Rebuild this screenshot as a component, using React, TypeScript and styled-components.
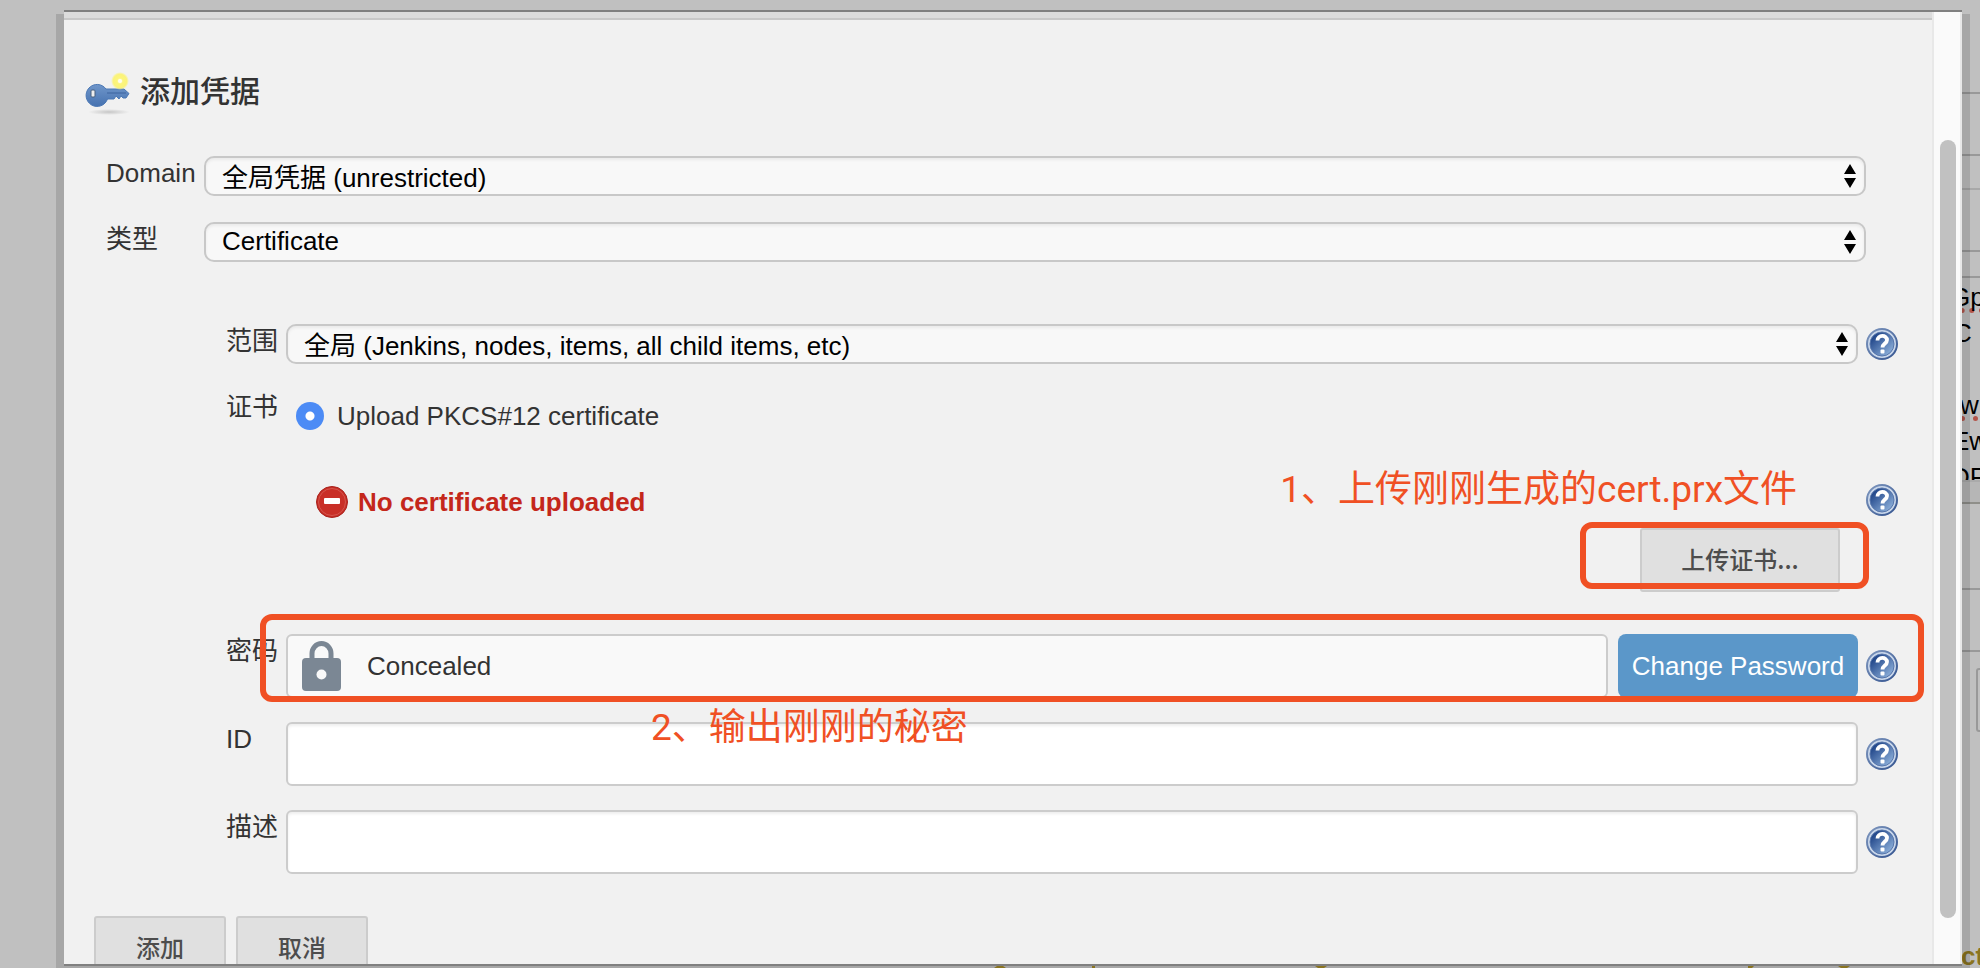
import React from "react";
import styled, { createGlobalStyle } from "styled-components";

const sans = `"Liberation Sans", Arial, "Noto Sans CJK SC", sans-serif`;
const cjk = `"Noto Sans CJK SC", "Liberation Sans", sans-serif`;

const GlobalStyle = createGlobalStyle`
  *, *::before, *::after { box-sizing: border-box; }
  body {
    margin: 0;
    background: #c0c0c0;
    color: #333;
    font: 26px/34px ${sans};
  }
  button, input, select { font: inherit; margin: 0; }
`;

const Page = styled.div`
  position: relative;
  height: 100vh;
  overflow: hidden;
  padding: 10px 18px 2px 64px;
`;

/* Dimmed configuration page that shows behind the dialog */
const Backdrop = styled.div`
  position: absolute;
  top: 0;
  right: 0;
  bottom: 0;
  width: 50px;
  overflow: hidden;
  display: flex;
  flex-direction: column;
  color: #000;
`;

const Band = styled.div<{ $height: number; $line?: string; $fill?: string }>`
  flex: none;
  height: ${(p) => p.$height}px;
  background: ${(p) => p.$fill ?? "transparent"};
  border-bottom: 2px solid ${(p) => p.$line ?? "#999"};
`;

const CodeArea = styled.div`
  flex: none;
  height: 204px;
  padding-top: 1px;
  overflow: hidden;
  line-height: 36px;
  border-bottom: 2px solid #aaa;
`;

const CodeLine = styled.div<{ $indent: number; $misspelt?: boolean }>`
  height: 36px;
  padding-left: ${(p) => p.$indent}px;
  white-space: nowrap;
  text-decoration: ${(p) => (p.$misspelt ? "underline dotted #b3554b 5px" : "none")};
  text-decoration-skip-ink: none;
  text-underline-offset: 2px;
`;

const BackdropField = styled.div`
  flex: none;
  width: 30px;
  height: 64px;
  margin: 16px 0 0 46px;
  border: 2px solid #999;
  border-radius: 3px;
`;

const BackdropNotice = styled.div`
  margin-top: auto;
  padding-left: 31px;
  height: 29px;
  font-weight: bold;
  color: #8a7420;
`;

const NoticeMarks = styled.svg`
  position: absolute;
  right: 0;
  bottom: 0;
  width: 1020px;
  height: 2px;
`;

const Dialog = styled.section`
  position: relative;
  display: flex;
  height: 100%;
  border: solid #808080;
  border-width: 2px 0;
  background: #f1f1f1;
  box-shadow: 0 12px 0 8px rgba(0, 0, 0, 0.13);
`;

const Viewport = styled.div`
  flex: 1;
  min-width: 0;
  overflow: hidden;
`;

const TopEdge = styled.div`
  height: 8px;
  background: #dcdcdc;
  border-bottom: 2px solid #c8c8c8;
`;

const Track = styled.div`
  flex: none;
  width: 30px;
  padding: 128px 4px 46px 6px;
  background: #fafafa;
  border: solid #e8e8e8;
  border-width: 0 2px;
`;

const Thumb = styled.div`
  height: 100%;
  border-radius: 8px;
  background: #c1c1c1;
`;

const Heading = styled.h1`
  display: flex;
  align-items: flex-start;
  gap: 8px;
  height: 44px;
  margin: 52px 0 40px 20px;
  font: 500 30px/34px ${cjk};
`;

const OuterFields = styled.div`
  display: flex;
  flex-direction: column;
  gap: 26px;
  padding: 0 66px 0 42px;
  margin-bottom: 62px;
`;

const OuterRow = styled.div`
  display: grid;
  grid-template-columns: 98px 1fr;
`;

const InnerFields = styled.div`
  padding: 0 34px 0 162px;
`;

const InnerRow = styled.div<{ $after?: number }>`
  position: relative;
  display: grid;
  grid-template-columns: 60px 1fr 32px;
  margin-bottom: ${(p) => p.$after ?? 24}px;
`;

const Label = styled.label`
  white-space: nowrap;
`;

const LabelText = styled.div`
  white-space: nowrap;
`;

const Control = styled.div`
  padding-right: 8px;
  min-width: 0;
`;

const SelectBox = styled.div`
  position: relative;
  height: 40px;
`;

const Select = styled.select<{ $low?: boolean }>`
  appearance: none;
  display: block;
  width: 100%;
  height: 40px;
  padding: ${(p) => (p.$low ? "4px 40px 0 16px" : "0 40px 2px 16px")};
  border: 2px solid #c8c8c8;
  border-radius: 10px;
  background: #f8f8f8;
  box-shadow: inset 0 2px 3px rgba(0, 0, 0, 0.06);
  color: #000;
  line-height: 32px;
`;

const Arrows = styled.svg`
  position: absolute;
  top: 8px;
  right: 10px;
  pointer-events: none;
`;

const HelpButton = styled.button<{ $align?: string }>`
  align-self: ${(p) => p.$align ?? "center"};
  width: 32px;
  height: 32px;
  padding: 0;
  border: 0;
  background: none;
  svg { display: block; }
`;

const RadioLabel = styled.label`
  display: flex;
  align-items: center;
  gap: 13px;
  height: 52px;
  padding-left: 10px;
`;

const Radio = styled.input`
  appearance: none;
  width: 28px;
  height: 28px;
  border-radius: 50%;
  background: radial-gradient(circle, #fff 0 4px, #4c8bf5 5px);
`;

const Status = styled.div`
  display: flex;
  align-items: center;
  gap: 10px;
  height: 36px;
  padding-left: 30px;
  color: #c4271b;
  font-weight: bold;
`;

const UploadRow = styled.div`
  position: relative;
  display: flex;
  justify-content: flex-end;
  padding-right: 58px;
  margin-bottom: 42px;
`;

const Button = styled.button<{ $width: number }>`
  width: ${(p) => p.$width}px;
  height: 64px;
  padding: 0 0 2px;
  border: 2px solid #ccc;
  border-radius: 3px;
  background: #e0e0e0;
  color: #4d4d4d;
  font: 500 24px/34px ${cjk};
`;

const TextInput = styled.input`
  display: block;
  width: 100%;
  height: 64px;
  padding: 0 12px;
  border: 2px solid #ccc;
  border-radius: 6px;
  background: #fff;
  box-shadow: inset 0 2px 3px rgba(0, 0, 0, 0.07);
`;

const SecretControl = styled(Control)`
  display: flex;
  gap: 10px;
`;

const Secret = styled.div`
  flex: 1;
  display: flex;
  align-items: center;
  gap: 26px;
  height: 64px;
  padding-left: 14px;
  border: 2px solid #ccc;
  border-radius: 6px;
  background: #f9f9f9;
`;

const ChangeButton = styled.button`
  width: 240px;
  height: 64px;
  padding: 0;
  border: 0;
  border-radius: 8px;
  background: #5b97c9;
  color: #fff;
`;

const Actions = styled.div`
  display: flex;
  gap: 10px;
  padding: 18px 0 0 30px;
`;

/* Red marker frames and notes laid over the form */
const Marker = styled.div<{ $top: number; $right: number; $left?: number; $width?: number; $height: number }>`
  position: absolute;
  top: ${(p) => p.$top}px;
  right: ${(p) => p.$right}px;
  left: ${(p) => (p.$left === undefined ? "auto" : `${p.$left}px`)};
  width: ${(p) => (p.$width === undefined ? "auto" : `${p.$width}px`)};
  height: ${(p) => p.$height}px;
  border: 6px solid #f05024;
  border-radius: 12px;
  pointer-events: none;
`;

const Note = styled.div`
  position: absolute;
  color: #f05024;
  font: 37px/48px Roboto, "Noto Sans CJK SC", sans-serif;
  white-space: nowrap;
  pointer-events: none;
`;

const UploadNote = styled(Note)`
  right: 101px;
  bottom: 78px;
`;

const PasswordNote = styled(Note)`
  left: 425px;
  top: -18px;
`;

function HelpIcon() {
  return (
    <svg width="32" height="32" viewBox="0 0 32 32" aria-hidden="true">
      <defs>
        <linearGradient id="help-fill" x1="0" y1="0" x2="1" y2="1">
          <stop offset="0.15" stopColor="#1f4488" />
          <stop offset="0.9" stopColor="#8fb2dc" />
        </linearGradient>
        <linearGradient id="help-rim" x1="0" y1="0" x2="1" y2="1">
          <stop offset="0" stopColor="#8098bf" />
          <stop offset="1" stopColor="#33538f" />
        </linearGradient>
      </defs>
      <circle cx="16" cy="16" r="15" fill="#c8d6ea" stroke="url(#help-rim)" strokeWidth="2" />
      <circle cx="16" cy="16" r="12" fill="url(#help-fill)" stroke="#5877ac" strokeWidth="1" />
      <path
        d="M11.500 12.500C11.500 6.500 21 6.500 21 12C21 15.500 16.500 15.500 16.500 19.500"
        fill="none"
        stroke="#fff"
        strokeWidth="3.800"
      />
      <rect x="14.500" y="21.500" width="4" height="4" rx="1" fill="#fff" />
    </svg>
  );
}

function Help({ topic, align }: { topic: string; align?: string }) {
  return (
    <HelpButton type="button" $align={align} aria-label={`Help for ${topic}`}>
      <HelpIcon />
    </HelpButton>
  );
}

function KeyIcon() {
  return (
    <svg width="48" height="44" viewBox="-1 -2 48 44" aria-hidden="true">
      <defs>
        <radialGradient id="key-glow">
          <stop offset="0" stopColor="#fffde0" />
          <stop offset="0.35" stopColor="#fcf57c" />
          <stop offset="0.75" stopColor="#fbf37a" />
          <stop offset="1" stopColor="#fbf37a" stopOpacity="0" />
        </radialGradient>
        <linearGradient id="key-body" x1="0" y1="0" x2="0" y2="1">
          <stop offset="0" stopColor="#6f96ca" />
          <stop offset="1" stopColor="#4672b0" />
        </linearGradient>
        <radialGradient id="key-shadow">
          <stop offset="0" stopColor="#000" stopOpacity="0.18" />
          <stop offset="1" stopColor="#000" stopOpacity="0" />
        </radialGradient>
      </defs>
      <ellipse cx="24" cy="38" rx="21" ry="3" fill="url(#key-shadow)" />
      <path
        d="M21 15H39L44 19.500L41 24H38L36 22L34 25L31 22L29 25H22.500A11 11 0 1 1 21 15Z"
        fill="url(#key-body)"
        stroke="#4b78b5"
        strokeWidth="1"
        strokeLinejoin="round"
      />
      <path d="M22 19H41" stroke="#3c659f" strokeWidth="1" />
      <rect x="6" y="16" width="4" height="7" rx="1" fill="#eee" stroke="#49617f" strokeWidth="1" />
      <circle cx="35" cy="7" r="9" fill="url(#key-glow)" />
      <circle cx="35" cy="7" r="2" fill="#fffef0" />
    </svg>
  );
}

function StopIcon() {
  return (
    <svg width="32" height="32" viewBox="0 0 32 32" aria-hidden="true">
      <circle cx="16" cy="16" r="15.500" fill="#c92f27" stroke="#a8221c" strokeWidth="1" />
      <circle cx="16" cy="16" r="13.500" fill="none" stroke="#d4554d" strokeWidth="1" />
      <rect x="8" y="12" width="16" height="6" rx="1" fill="#fff" />
    </svg>
  );
}

function LockIcon() {
  return (
    <svg width="39" height="50" viewBox="0 0 39 50" aria-hidden="true">
      <path d="M10 19V12.500A9.500 10 0 0 1 29 12.500V19" fill="none" stroke="#7b8794" strokeWidth="5" />
      <rect y="17" width="39" height="33" rx="4" fill="#7b8794" />
      <circle cx="19.500" cy="33.500" r="5" fill="#f9f9f9" />
    </svg>
  );
}

function SelectField({ id, option, low }: { id: string; option: string; low?: boolean }) {
  return (
    <SelectBox>
      <Select id={id} $low={low}>
        <option>{option}</option>
      </Select>
      <Arrows width="12" height="24" viewBox="0 0 12 24" aria-hidden="true">
        <path d="M6 0L12 10H0ZM0 14H12L6 24Z" fill="#000" />
      </Arrows>
    </SelectBox>
  );
}

export default function App() {
  return (
    <Page>
      <GlobalStyle />
      <Backdrop aria-hidden="true">
        <Band $height={94} />
        <Band $height={62} />
        <Band $height={34} $line="#a8a8a8" />
        <Band $height={62} />
        <Band $height={26} />
        <CodeArea>
          <CodeLine $indent={20} $misspelt>Gp</CodeLine>
          <CodeLine $indent={23}>C</CodeLine>
          <CodeLine $indent={22} />
          <CodeLine $indent={30} $misspelt>w</CodeLine>
          <CodeLine $indent={22}>Ew</CodeLine>
          <CodeLine $indent={21}>DF</CodeLine>
        </CodeArea>
        <Band $height={22} $fill="#b6b6b6" $line="#8f8f8a" />
        <Band $height={86} />
        <Band $height={62} />
        <BackdropField />
        <BackdropNotice>ct</BackdropNotice>
      </Backdrop>
      <Dialog role="dialog" aria-labelledby="dialog-title">
        <Viewport>
          <TopEdge />
          <Heading id="dialog-title">
            <KeyIcon />
            添加凭据
          </Heading>
          <form onSubmit={(e) => e.preventDefault()}>
            <OuterFields>
              <OuterRow>
                <Label htmlFor="domain">Domain</Label>
                <SelectField id="domain" option="全局凭据 (unrestricted)" low />
              </OuterRow>
              <OuterRow>
                <Label htmlFor="kind">类型</Label>
                <SelectField id="kind" option="Certificate" />
              </OuterRow>
            </OuterFields>
            <InnerFields>
              <InnerRow $after={26}>
                <Label htmlFor="scope">范围</Label>
                <Control>
                  <SelectField id="scope" option="全局 (Jenkins, nodes, items, all child items, etc)" low />
                </Control>
                <Help topic="范围" />
              </InnerRow>
              <InnerRow $after={42}>
                <LabelText>证书</LabelText>
                <RadioLabel>
                  <Radio type="radio" name="certificate" defaultChecked />
                  Upload PKCS#12 certificate
                </RadioLabel>
              </InnerRow>
              <InnerRow $after={8}>
                <span />
                <Status>
                  <StopIcon />
                  No certificate uploaded
                </Status>
                <Help topic="证书" align="start" />
              </InnerRow>
              <UploadRow>
                <Button type="button" $width={200}>上传证书...</Button>
                <Marker $top={-6} $right={29} $width={289} $height={67} />
                <UploadNote>1、上传刚刚生成的cert.prx文件</UploadNote>
              </UploadRow>
              <InnerRow>
                <LabelText>密码</LabelText>
                <SecretControl>
                  <Secret>
                    <LockIcon />
                    Concealed
                  </Secret>
                  <ChangeButton type="button">Change Password</ChangeButton>
                </SecretControl>
                <Help topic="密码" />
                <Marker $top={-20} $left={34} $right={-26} $height={88} />
              </InnerRow>
              <InnerRow>
                <Label htmlFor="credential-id">ID</Label>
                <Control>
                  <TextInput id="credential-id" type="text" />
                </Control>
                <Help topic="ID" />
                <PasswordNote>2、输出刚刚的秘密</PasswordNote>
              </InnerRow>
              <InnerRow>
                <Label htmlFor="description">描述</Label>
                <Control>
                  <TextInput id="description" type="text" />
                </Control>
                <Help topic="描述" />
              </InnerRow>
            </InnerFields>
            <Actions>
              <Button type="submit" $width={132}>添加</Button>
              <Button type="button" $width={132}>取消</Button>
            </Actions>
          </form>
        </Viewport>
        <Track>
          <Thumb />
        </Track>
      </Dialog>
      <NoticeMarks viewBox="0 0 1020 2" aria-hidden="true">
        <path d="M34 2L37 0H43L46 2ZM132 0H135V2H132ZM355 0H367L364 2H358ZM788 0H794L792 2H788ZM878 0H890L887 2H881Z" fill="#8a7420" />
      </NoticeMarks>
    </Page>
  );
}
